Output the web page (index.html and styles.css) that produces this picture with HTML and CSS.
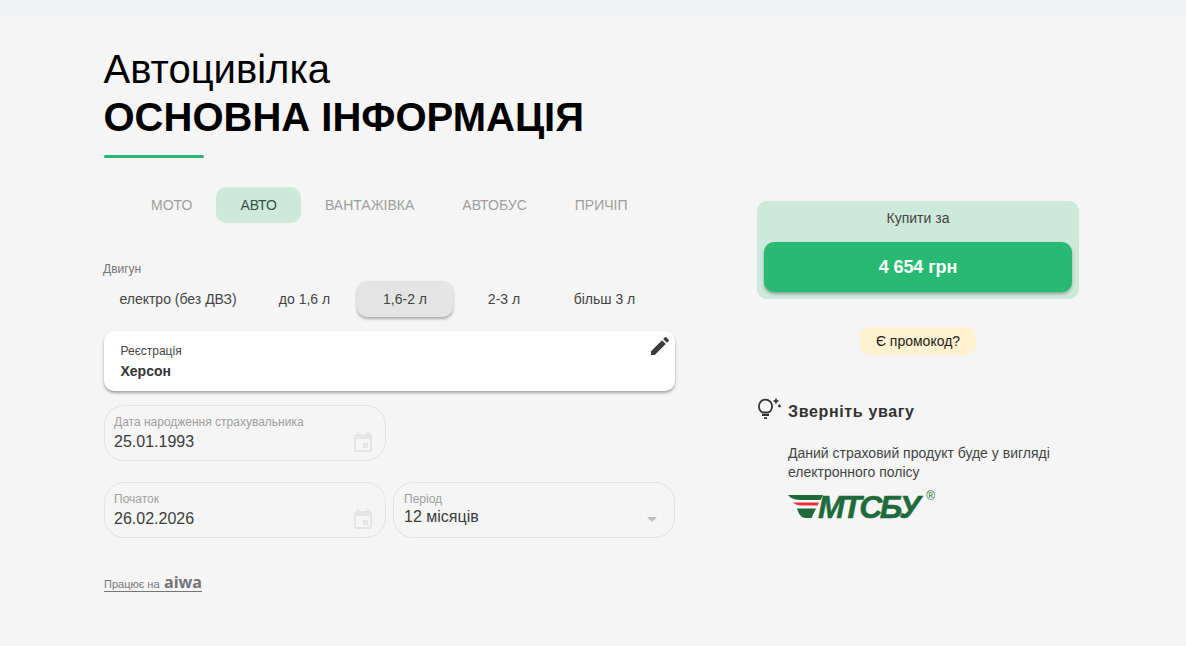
FILE: index.html
```html
<!DOCTYPE html>
<html lang="uk">
<head>
<meta charset="utf-8">
<title>Автоцивілка</title>
<link rel="stylesheet" href="styles.css">
</head>
<body>
<div class="top-bar"></div>
<main class="page">
  <section class="left">
    <h1 class="title"><span class="title-light">Автоцивілка</span><span class="title-bold">ОСНОВНА ІНФОРМАЦІЯ</span></h1>
    <div class="title-rule"></div>
    <nav class="tabs">
      <span class="tab">МОТО</span>
      <span class="tab tab-active">АВТО</span>
      <span class="tab">ВАНТАЖІВКА</span>
      <span class="tab">АВТОБУС</span>
      <span class="tab">ПРИЧІП</span>
    </nav>
    <div class="engine-label">Двигун</div>
    <div class="engine">
      <span class="eng e1">електро (без ДВЗ)</span>
      <span class="eng e2">до 1,6 л</span>
      <span class="eng e3 eng-active">1,6-2 л</span>
      <span class="eng e4">2-3 л</span>
      <span class="eng e5">більш 3 л</span>
    </div>
    <div class="reg-card">
      <div class="reg-label">Реєстрація</div>
      <div class="reg-value">Херсон</div>
      <svg class="pencil" viewBox="0 0 24 24" width="24" height="24"><path d="M3 17.25V21h3.75L17.81 9.94l-3.75-3.75L3 17.25zM20.71 7.04a1 1 0 0 0 0-1.41l-2.34-2.34a1 1 0 0 0-1.41 0l-1.83 1.83 3.75 3.75 1.83-1.83z"/></svg>
    </div>
    <div class="field-row first-row">
      <div class="field">
        <div class="field-label">Дата народження страхувальника</div>
        <div class="field-value">25.01.1993</div>
        <svg class="cal" viewBox="0 0 24 24" width="24" height="24"><path d="M17 12h-5v5h5v-5zM16 1v2H8V1H6v2H5a2 2 0 0 0-2 2v14a2 2 0 0 0 2 2h14a2 2 0 0 0 2-2V5a2 2 0 0 0-2-2h-1V1h-2zm3 18H5V8h14v11z"/></svg>
      </div>
    </div>
    <div class="field-row">
      <div class="field">
        <div class="field-label">Початок</div>
        <div class="field-value">26.02.2026</div>
        <svg class="cal" viewBox="0 0 24 24" width="24" height="24"><path d="M17 12h-5v5h5v-5zM16 1v2H8V1H6v2H5a2 2 0 0 0-2 2v14a2 2 0 0 0 2 2h14a2 2 0 0 0 2-2V5a2 2 0 0 0-2-2h-1V1h-2zm3 18H5V8h14v11z"/></svg>
      </div>
      <div class="field field-select">
        <div class="field-label">Період</div>
        <div class="field-value select-value">12 місяців</div>
        <svg class="caret" viewBox="0 0 24 24" width="24" height="24"><path d="M7 10l5 5 5-5z"/></svg>
      </div>
    </div>
    <a class="powered"><span class="powered-text">Працює на</span> <span class="aiwa">aiwa</span></a>
  </section>
  <aside class="right">
    <div class="buy-box">
      <div class="buy-label">Купити за</div>
      <div class="buy-btn">4 654 грн</div>
    </div>
    <div class="promo-wrap"><span class="promo">Є промокод?</span></div>
    <div class="notice-head">
      <svg class="bulb" viewBox="0 0 24 24" width="24" height="24"><g fill="none" stroke="#333" stroke-width="1.800"><path d="M5.500 15.500C3 14 1.900 12 1.900 9.200a6.600 6.600 0 0 1 13.200 0c0 2.800-1.100 4.800-3.600 6.300z"/><path d="M5 18h7M7 21.200h3"/></g><path fill="#333" d="M19 .5l1 2.500 2.500 1-2.500 1-1 2.500-1-2.500-2.500-1 2.500-1z"/><circle cx="22.500" cy="9" r="1.400" fill="#333"/></svg>
      <span class="notice-title">Зверніть увагу</span>
    </div>
    <p class="notice-text">Даний страховий продукт буде у вигляді електронного полісу</p>
    <div class="mtsbu">
      <svg class="mtsbu-mark" viewBox="0 0 36 24" width="36" height="24"><path fill="#1d6b3a" d="M0 0h35l-2.500 5H14C8 5 3 4 0 0z"/><path fill="#e8303a" d="M5 7.500h26l-1.500 3H13C10 10.500 7 9.500 5 7.500z"/><path fill="#1d6b3a" d="M9 13.500h19l-4.500 9.500h-6c-4 0-7-4-8.500-9.500z"/></svg>
      <span class="mtsbu-name">МТСБУ</span>
      <span class="mtsbu-reg">®</span>
    </div>
  </aside>
</main>
</body>
</html>
```
FILE: styles.css
```css
* { box-sizing: border-box; }
html, body { margin: 0; padding: 0; }
body {
  width: 1186px;
  height: 646px;
  overflow: hidden;
  background: #f5f5f5;
  font-family: "Liberation Sans", Arial, sans-serif;
  color: #333;
}
.top-bar { height: 17px; background: #eff3f4; }
.page { display: flex; padding-left: 104px; }
.left { width: 571px; }
.right { width: 322px; margin-left: 82px; padding-top: 184px; }

.title { margin: 0 0 0 -.5px; padding-top: 28px; color: #000; font-weight: 400; }
.title-light { display: block; font-size: 40px; line-height: 48px; }
.title-bold { display: block; font-size: 40px; line-height: 48px; font-weight: 700; }
.title-rule { width: 100px; height: 3px; margin-top: 14px; background: #28ba73; border-radius: 2px; }

.tabs { display: flex; margin: 29px 0 0 23px; }
.tab { height: 36px; padding: 0 24px; font-size: 14px; line-height: 36px; color: #9e9e9e; border-radius: 10px; }
.tab-active { background: #cde9db; color: #35524a; }

.engine-label { margin-top: 39px; margin-left: -1px; font-size: 12px; line-height: 14px; color: #757575; }
.engine { display: flex; margin-top: 5px; height: 36px; }
.eng { height: 36px; font-size: 14px; line-height: 36px; color: #444; text-align: center; border-radius: 10px; }
.e1 { width: 148px; }
.e2 { width: 105px; }
.e3 { width: 96px; }
.e4 { width: 102px; }
.e5 { width: 99px; }
.eng-active { background: #e4e4e4; box-shadow: 0 2px 3px rgba(0,0,0,.3); }

.reg-card { position: relative; height: 60px; margin-top: 14px; padding: 13px 16.500px; background: #fff; border-radius: 10px; box-shadow: 0 2px 3px rgba(0,0,0,.35); }
.reg-label { font-size: 12px; line-height: 14px; color: #444; }
.reg-value { margin-top: 5px; font-size: 14px; line-height: 16px; font-weight: 700; color: #333; }
.pencil { position: absolute; top: 3px; right: 3px; fill: #3c3c3c; }

.field-row { display: flex; gap: 7px; margin-top: 21px; }
.first-row { margin-top: 14px; }
.field { position: relative; width: 282px; height: 56px; padding: 9px 9px; border: 1px solid #e2e2e2; border-radius: 20px; }
.field-select { padding-left: 10px; }
.field-label { font-size: 12px; line-height: 14px; color: #9e9e9e; }
.field-value { margin-top: 3px; font-size: 16px; line-height: 20px; color: #3c3c3c; }
.select-value { margin-top: 1px; }
.cal { position: absolute; right: 10px; top: 25px; fill: #e4e4e4; }
.caret { position: absolute; right: 10px; top: 24px; fill: #bdbdbd; }

.powered { display: inline-block; margin-top: 36px; color: #757575; border-bottom: 1px solid #757575; line-height: 16px; height: 18px; }
.powered-text { font-size: 11px; }
.aiwa { font-family: "Open Sans", sans-serif; font-size: 16px; font-weight: 700; }

.buy-box { height: 98px; padding: 7px 7px 0; background: #cde9db; border-radius: 10px; }
.buy-label { font-size: 14px; line-height: 20px; text-align: center; color: #444; }
.buy-btn { height: 50px; margin-top: 14px; background: #28ba73; border-radius: 10px; box-shadow: 0 2px 3px rgba(0,0,0,.3); color: #fff; font-size: 18px; font-weight: 700; letter-spacing: -.1px; line-height: 50px; text-align: center; }

.promo-wrap { margin-top: 28px; text-align: center; height: 28px; }
.promo { display: inline-block; height: 28px; padding: 0 16px; background: #fff2d0; border-radius: 10px; font-size: 14px; line-height: 28px; color: #222; }

.notice-head { display: flex; align-items: center; gap: 7px; margin-top: 42px; height: 26px; }
.bulb { margin-top: -2px; }
.notice-title { margin-top: 3px; font-size: 16px; font-weight: 700; letter-spacing: .65px; color: #333; }
.notice-text { margin: 21px 0 0 31px; width: 280px; font-size: 14px; line-height: 19px; color: #444; }

.mtsbu { display: flex; align-items: flex-start; margin: 8px 0 0 31px; height: 32px; }
.mtsbu-mark { margin-top: 5px; }
.mtsbu-name { margin-left: -6px; font-size: 32px; line-height: 34px; font-weight: 700; font-style: italic; letter-spacing: -2.500px; color: #1d6b3a; -webkit-text-stroke: .5px #1d6b3a; }
.mtsbu-reg { margin-left: 8px; font-size: 12px; line-height: 12px; color: #1d6b3a; }
```
